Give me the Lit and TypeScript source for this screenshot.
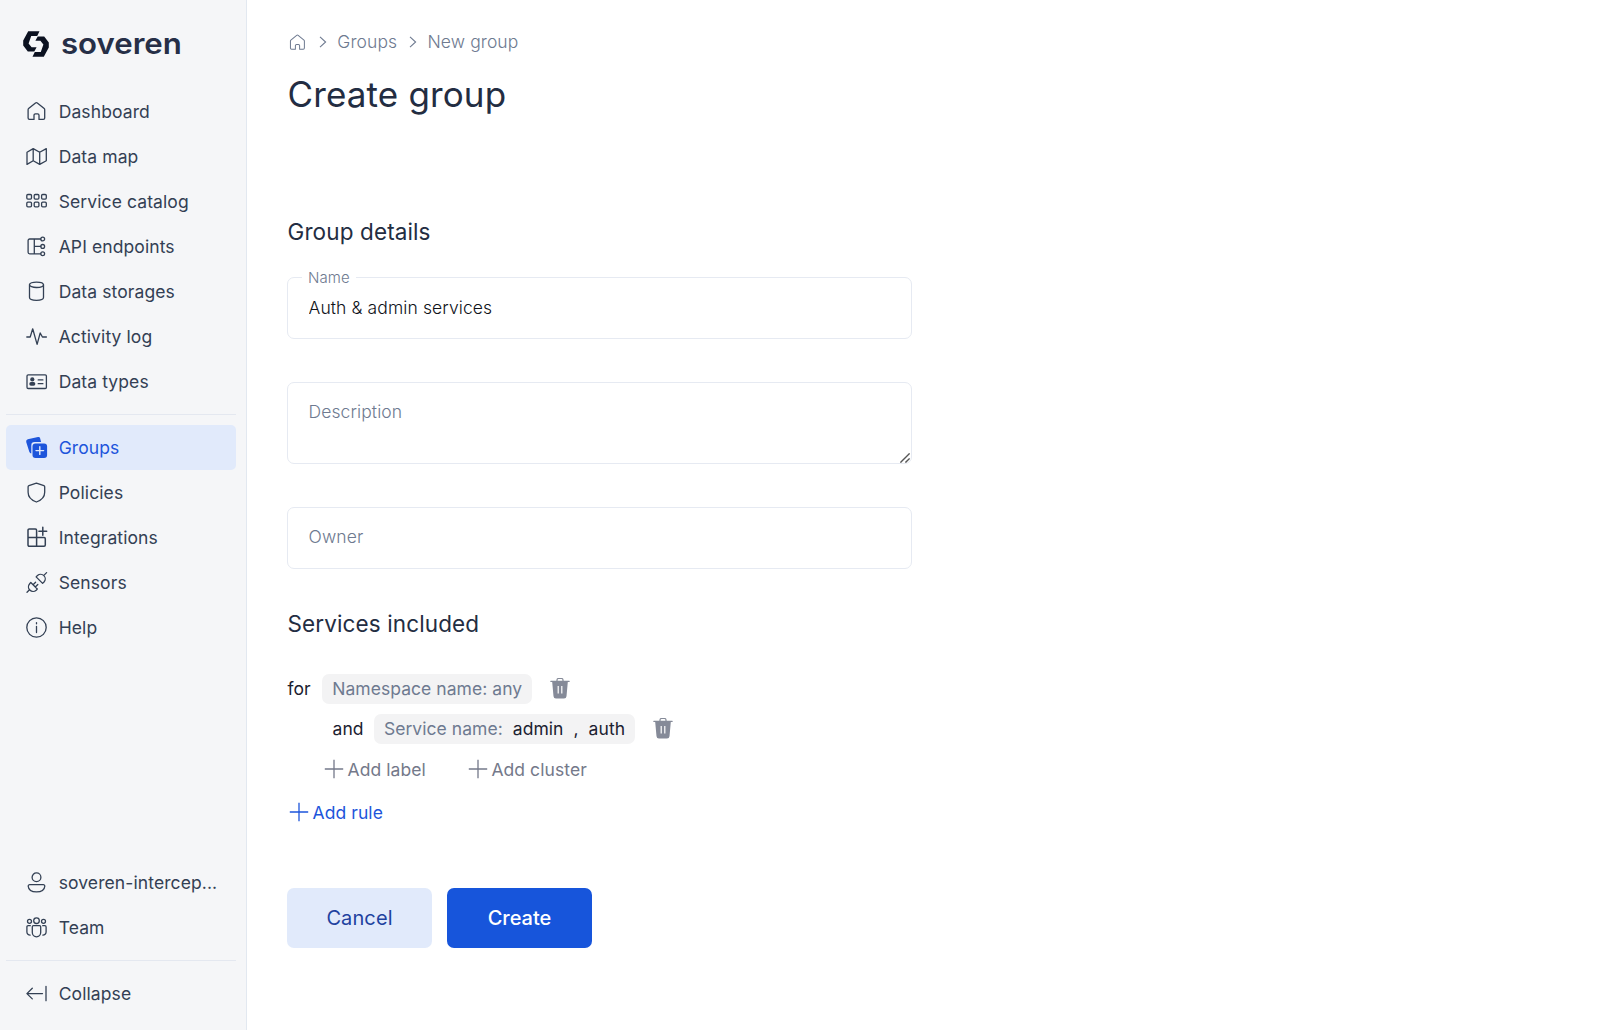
import { LitElement, html, css, svg } from "lit";
import { customElement } from "lit/decorators.js";
import { classMap } from "lit/directives/class-map.js";

const icons: Record<string, unknown> = {
  home: svg`<path d="M10 20.4H5.5a1.4 1.4 0 0 1-1.4-1.4v-8.3q0-.7.5-1.1l6.9-5.7q.9-.7 1.8 0l6.9 5.7q.5.4.5 1.1V19a1.4 1.4 0 0 1-1.4 1.4H15v-4.2a1.4 1.4 0 0 0-1.4-1.4h-2.2a1.4 1.4 0 0 0-1.4 1.4z"/>`,
  map: svg`<path d="M3 8.2v12.2l6.2-3.6 6.5 3.6 6.6-3.6V4.6L15.7 8.2 9.2 4.6zM9.2 4.6v12.2M15.7 8.2v12.2"/>`,
  catalog: svg`${[2.8, 10.2, 17.6].map((x) =>
    [5.5, 13.2].map((y) => svg`<rect x=${x} y=${y} width="4.700" height="4.700" rx="1.100"/>`))}`,
  api: svg`<path d="M16.7 5H5.6A1.5 1.5 0 0 0 4.1 6.500v11.800a1.500 1.500 0 0 0 1.500 1.500h11.100M10.300 5v14.800M10.300 12.400h6.400"/><circle cx="18.700" cy="5" r="1.900"/><circle cx="18.700" cy="12.400" r="1.900"/><circle cx="18.700" cy="19.800" r="1.900"/>`,
  storage: svg`<ellipse cx="12.500" cy="5.800" rx="7" ry="2.700"/><path d="M5.500 5.800v12.800c0 1.500 3.100 2.700 7 2.700s7-1.200 7-2.700V5.800"/>`,
  activity: svg`<path d="M2.800 13h3.400L8.700 4.800l4.400 15.600L16.200 9l2.200 4h4"/>`,
  types: svg`<rect x="3" y="5.800" width="19.400" height="13.700" rx="1.200"/><path d="M14.200 10.900h4.700M14.200 14.700h4.700"/><g class="solid"><circle cx="8.300" cy="10.400" r="2.100"/><rect x="5.300" y="13.100" width="6" height="3.600" rx="1.700"/></g>`,
  groups: svg`<g class="solid"><path d="M3.800 4.300 14 2q1.700-.4 2.100 1.200l1 3.900h-6.500Q7.300 7.100 7.300 10.400v8.100q-1.500-.2-2-1.800L2.200 6.900Q1.800 4.800 3.800 4.300z"/><rect x="8.500" y="8.400" width="14.600" height="14.600" rx="3"/></g><path class="knock" d="M15.800 11.800v7.600M12 15.600h7.600"/>`,
  shield: svg`<path d="M12.400 3.100 19.900 5.600q.8.300.8 1.100v5.600c0 5-3.400 8-8.300 9.700-4.900-1.700-8.300-4.700-8.300-9.700V6.700q0-.8.8-1.100z"/>`,
  integrations: svg`<path class="strong" d="M12.600 12.500V5.200a1.200 1.200 0 0 0-1.200-1.200H5.200A1.200 1.200 0 0 0 4 5.200v14.900a1.200 1.200 0 0 0 1.200 1.200h14.900a1.200 1.200 0 0 0 1.200-1.200v-6.400a1.200 1.200 0 0 0-1.200-1.200H4M12.600 12.500v8.800M18.800 2.300v8M14.900 6.300h7.800"/>`,
  sensors: svg`<path d="M3 22.200 5.500 19.700M6.800 12.500l6.500 6.500-1.100 1.200a4.600 4.600 0 0 1-6.500-6.500zM9.100 14.800l2.500-2.500M11.300 17l2.500-2.500M22.600 2.600l-2.500 2.500M12.100 6.900l6.500 6.500 1.400-1.400a4.600 4.600 0 0 0-6.500-6.500z"/>`,
  help: svg`<circle cx="12.500" cy="12.500" r="9.700"/><path d="M12.500 11.300v6.200M12.500 7.600v1.200"/>`,
  user: svg`<circle cx="12.500" cy="7.300" r="4.400"/><path d="M5.700 14.600h13.600a1.500 1.500 0 0 1 1.500 1.600c-.3 3.500-3.500 5.700-8.300 5.700s-8-2.200-8.300-5.700a1.500 1.500 0 0 1 1.500-1.600z"/>`,
  team: svg`<circle cx="12.500" cy="5.700" r="2.800"/><circle cx="5.500" cy="6.300" r="2"/><circle cx="19.500" cy="6.300" r="2"/><path d="M8.300 11.800a1.200 1.200 0 0 1 1.200-1.200h6a1.200 1.200 0 0 1 1.200 1.200v5.800a4.200 4.200 0 0 1-8.400 0zM6.300 10.700H4.100A1.200 1.200 0 0 0 2.900 11.900v5a3.200 3.200 0 0 0 3.300 3.200M18.700 10.700h2.200a1.200 1.200 0 0 1 1.200 1.200v5a3.200 3.200 0 0 1-3.300 3.200"/>`,
  collapse: svg`<path d="M18.500 12.600H2.900M8.300 7.300 2.900 12.600l5.400 5.300M22 5.300v14.400"/>`,
};

const icon = (name: string) => html`<svg class="icon" viewBox="0 0 25 25">${icons[name]}</svg>`;
const chevron = html`<svg class="chevron" viewBox="0 0 8 12"><path d="M1 .8 6.600 6 1 11.200"/></svg>`;
const plus = html`<svg class="plus" viewBox="0 0 20 20"><path d="M10 .8v18.400M.8 10h18.400"/></svg>`;
const trash = html`<svg class="trash" viewBox="0 0 20 21"><path d="M7 3V2a1.500 1.500 0 0 1 1.500-1.500h3A1.500 1.500 0 0 1 13 2v1" fill="none" stroke="currentColor" stroke-width="1.200"/><path d="M.8 2.700h18.400q.6 0 .6.600t-.6.600h-1.400l-1.300 14.300q-.2 2.300-2.500 2.300H6q-2.300 0-2.500-2.300L2.200 3.900H.8q-.6 0-.6-.6t.6-.6z"/><path d="M8.200 8v7.500M11.800 8v7.500" stroke="#fff" stroke-width="1.200"/></svg>`;

@customElement("app-root")
export class AppRoot extends LitElement {
  static styles = css`
    :host { display: flex; height: 1030px; background: #fff; color: #232d42; font: 400 17.5px/22px Inter, sans-serif; letter-spacing: .08px; overflow: hidden; }
    * { box-sizing: border-box; }
    svg { display: block; flex: none; fill: none; stroke: currentColor; }
    .side { width: 247px; flex: none; border-right: 1px solid #e2e8f0; background: #f5f6f8; padding: 31px 10px 14px 6px; display: flex; flex-direction: column; color: #334054; letter-spacing: .1px; }
    .brand { display: flex; align-items: center; height: 26px; padding-left: 17px; gap: 11.500px; margin-bottom: 32px; }
    .mark { width: 26px; height: 26px; fill: #0b1120; stroke: none; }
    .word { font-size: 29px; font-weight: 600; line-height: 26px; color: #262f47; letter-spacing: 0; transform: scaleX(1.075); transform-origin: 0 50%; }
    .item { display: flex; align-items: center; gap: 9.700px; height: 45px; padding-left: 18px; border-radius: 5px; flex: none; }
    .item.on { background: #e1eafb; color: #1d55db; }
    .icon { width: 25px; height: 25px; stroke-width: 1.300; stroke-linecap: round; stroke-linejoin: round; }
    .icon .solid { fill: currentColor; stroke: none; }
    .icon .knock { stroke: #e1eafb; stroke-width: 1.400; }
    .icon .strong { stroke-width: 1.500; }
    .rule { height: 1px; flex: none; background: #e4e8f0; margin: 10px 0; }
    .spacer { flex: 1; }
    .main { flex: 1; padding: 30px 0 0 40px; display: flex; flex-direction: column; align-items: flex-start; }
    .crumbs { display: flex; align-items: center; height: 24px; color: #6e7a90; font-weight: 300; letter-spacing: .1px; }
    .crumbs .icon { width: 21px; height: 21px; stroke-width: 1.200; margin-right: -1px; }
    .chevron { width: 8px; height: 12px; margin: 0 10.300px 0 12px; stroke-width: 1.100; }
    h1 { margin: 18px 0 0 .5px; font-size: 35px; line-height: 44px; font-weight: 400; letter-spacing: .14px; }
    h2 { margin: 0 0 0 .5px; font-size: 22.5px; line-height: 30px; font-weight: 400; letter-spacing: .12px; }
    h2.details { margin-top: 101px; }
    .field { width: 625px; margin: 0; border: 1px solid #e6eaf2; border-radius: 7px; background: #fff; height: 62px; padding: 0 20px 2px 20.500px; font: inherit; font-weight: 300; letter-spacing: .1px; color: #10131a; outline: none; display: block; }
    .named { position: relative; margin-top: 30px; }
    .float { position: absolute; left: 15px; top: -9px; padding: 0 6px; background: #fff; font-size: 15px; font-weight: 300; line-height: 20px; color: #6e7a90; letter-spacing: .1px; }
    .areawrap { position: relative; margin-top: 43px; }
    .area { height: 82px; padding: 18px 20px 18px 20.500px; resize: none; overflow: hidden; }
    .grip { position: absolute; right: 2px; bottom: 1px; width: 10px; height: 10px; stroke: #555; stroke-width: 1.400; }
    .field::placeholder { color: #6e7a90; opacity: 1; }
    .owner { margin-top: 43px; padding-bottom: 4px; }
    h2.services { margin-top: 40px; }
    .row { display: flex; align-items: center; height: 30px; color: #1b2130; }
    .first { margin: 35px 0 0 .4px; }
    .second { margin: 10px 0 0 45.500px; }
    .chip { display: flex; align-items: center; height: 30px; border-radius: 7px; background: #f3f3f4; padding: 0 10px; margin-left: 11.500px; gap: 10px; color: #6e7a90; white-space: pre; letter-spacing: .05px; }
    .second .chip { margin-left: 10.300px; }
    .value { color: #1b2130; }
    .trash { width: 20px; height: 21px; fill: #858a98; stroke: none; color: #858a98; margin: 0 0 2px 18px; }
    .adds { margin: 11px 0 0 37px; color: #74798a; }
    .add { display: flex; align-items: center; gap: 3.500px; }
    .add + .add { margin-left: 42px; }
    .plus { width: 20px; height: 20px; stroke-width: 1.300; }
    .adds .plus, .addrule .plus { margin-bottom: 2px; }
    .addrule { margin: 13px 0 0 2px; height: 30px; color: #1d55db; }
    .buttons { display: flex; gap: 15px; margin-top: 60px; }
    .btn { width: 145px; height: 60px; border: 0; border-radius: 7px; font: 400 20px/24px Inter, sans-serif; letter-spacing: .1px; background: #e1eafb; color: #1e429f; padding: 0; }
    .btn.primary { background: #1755db; color: #fff; font-weight: 500; letter-spacing: 0; }
  `;

  private item(name: string, label: string, on = false) {
    return html`<div class=${classMap({ item: true, on })}>${icon(name)}<span>${label}</span></div>`;
  }

  render() {
    return html`
      <nav class="side">
        <div class="brand">
          <svg class="mark" viewBox="0 0 26 26"><path d="M16.500.3H5.200L.2 9.500v5L4.800 20.600h6.500l2.300-4.400H8.600L5.600 12.500 8.200 4.900h6z"/><path d="M9.500 25.700h11.300l5-9.200v-5L21.200 5.400h-6.500l-2.300 4.400h5l3 3.700-2.600 7.600h-6z"/></svg>
          <span class="word">soveren</span>
        </div>
        ${this.item("home", "Dashboard")}
        ${this.item("map", "Data map")}
        ${this.item("catalog", "Service catalog")}
        ${this.item("api", "API endpoints")}
        ${this.item("storage", "Data storages")}
        ${this.item("activity", "Activity log")}
        ${this.item("types", "Data types")}
        <div class="rule"></div>
        ${this.item("groups", "Groups", true)}
        ${this.item("shield", "Policies")}
        ${this.item("integrations", "Integrations")}
        ${this.item("sensors", "Sensors")}
        ${this.item("help", "Help")}
        <div class="spacer"></div>
        ${this.item("user", "soveren-intercep...")}
        ${this.item("team", "Team")}
        <div class="rule"></div>
        ${this.item("collapse", "Collapse")}
      </nav>
      <main class="main">
        <div class="crumbs">${icon("home")}${chevron}<span>Groups</span>${chevron}<span>New group</span></div>
        <h1>Create group</h1>
        <h2 class="details">Group details</h2>
        <div class="named"><input class="field" value="Auth &amp; admin services" /><span class="float">Name</span></div>
        <div class="areawrap">
          <textarea class="field area" placeholder="Description"></textarea>
          <svg class="grip" viewBox="0 0 10 10"><path d="M.4 9.600 9.600.4M5.400 9.600 9.600 5.400"/></svg>
        </div>
        <input class="field owner" placeholder="Owner" />
        <h2 class="services">Services included</h2>
        <div class="row first"><span>for</span><span class="chip">Namespace name: any</span>${trash}</div>
        <div class="row second"><span>and</span><span class="chip"><span>Service name:</span><span class="value">admin</span><span class="value">,</span><span class="value">auth</span></span>${trash}</div>
        <div class="row adds"><span class="add">${plus}Add label</span><span class="add">${plus}Add cluster</span></div>
        <div class="add addrule">${plus}Add rule</div>
        <div class="buttons"><button class="btn">Cancel</button><button class="btn primary">Create</button></div>
      </main>`;
  }
}
